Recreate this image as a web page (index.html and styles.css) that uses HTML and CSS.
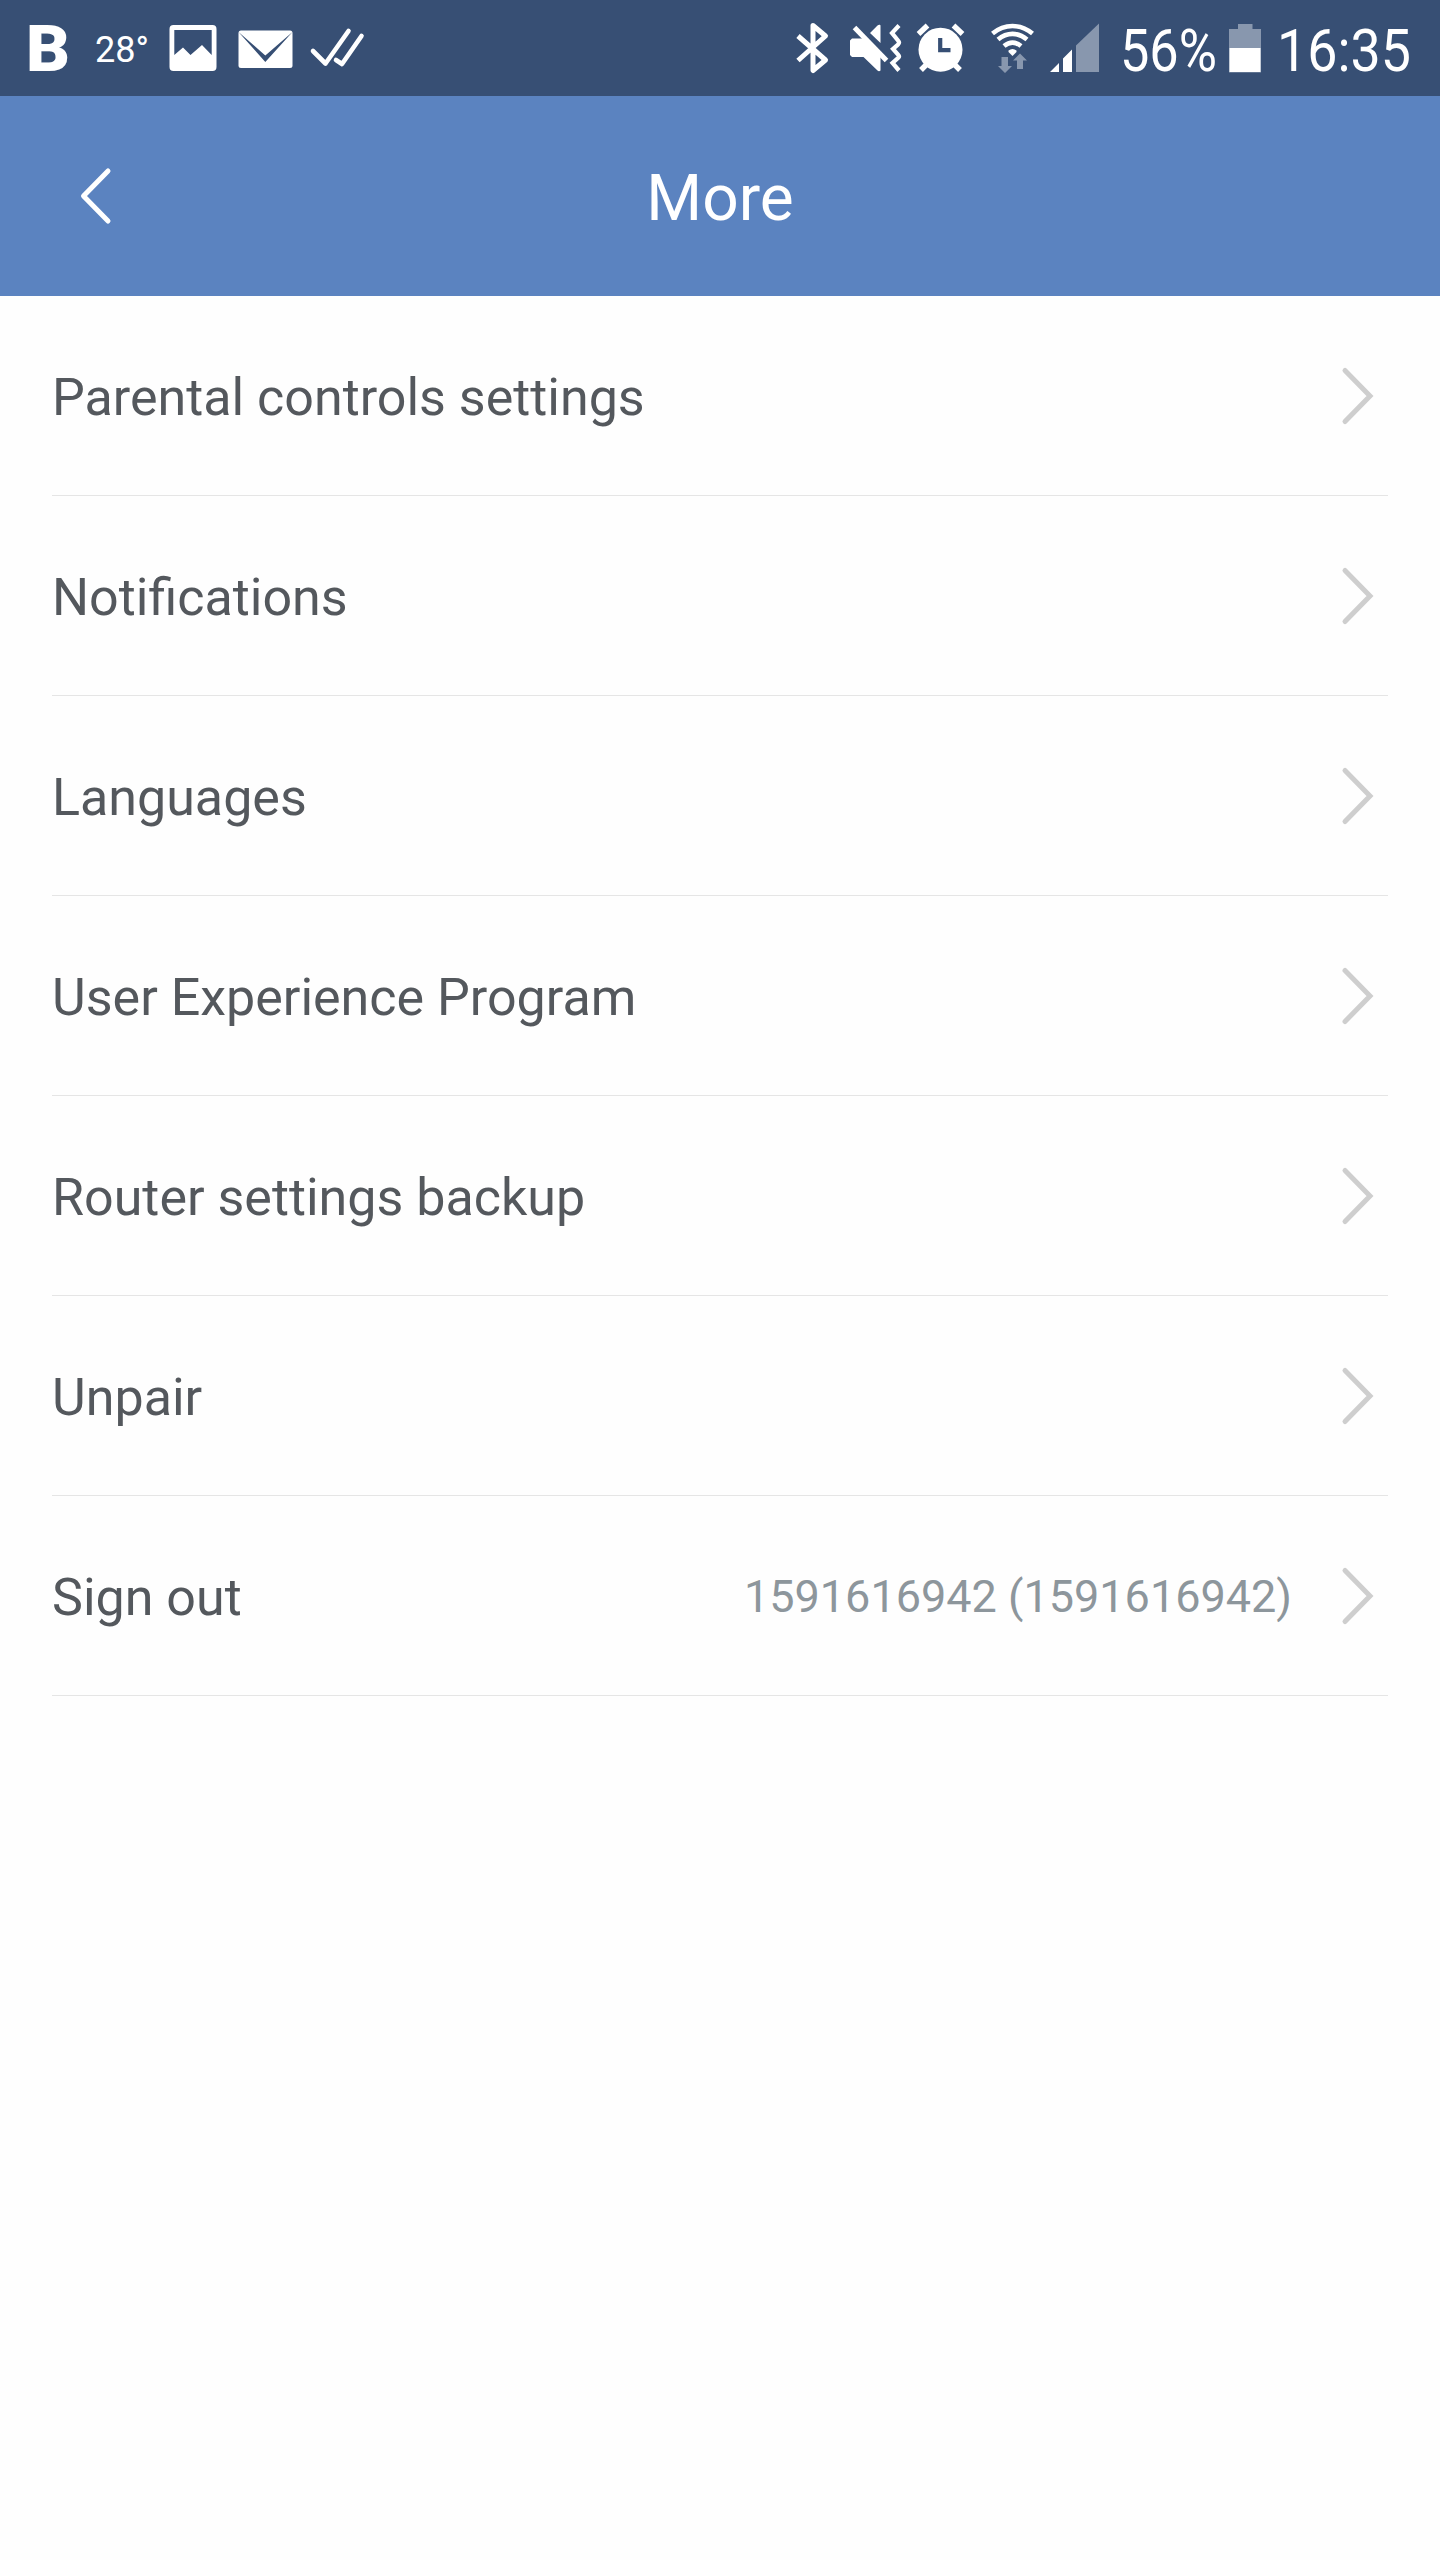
FILE: index.html
```html
<!DOCTYPE html>
<html lang="en">
  <head>
    <meta charset="UTF-8" />
    <meta name="viewport" content="width=device-width, initial-scale=1.0" />
    <title>More</title>
    <link rel="stylesheet" href="styles.css">
  </head>

  <body>
    <div class="status">
      <div class="status_left">
        <svg width="60" height="96" viewBox="24 0 60 96">
          <text x="26" y="71" class="logo" textLength="44" lengthAdjust="spacingAndGlyphs">B</text>
        </svg>
        <svg width="76" height="96" viewBox="84 0 76 96">
          <text x="95" y="62" class="temp" textLength="54" lengthAdjust="spacingAndGlyphs">28°</text>
        </svg>
        <!-- picture -->
        <svg width="66" height="96" viewBox="160 0 66 96">
          <path fill-rule="evenodd" d="M173.500 25h39a4 4 0 0 1 4 4v38a4 4 0 0 1-4 4h-39a4 4 0 0 1-4-4v-38a4 4 0 0 1 4-4zM174.300 30v25l8.700-7.500 7.500 7.500 11.500-10 9.700 10v-25z" />
        </svg>
        <!-- mail -->
        <svg width="76" height="96" viewBox="226 0 76 96">
          <rect x="238.500" y="30.500" width="54" height="37.500" rx="2.500" />
          <path class="cut" d="M238.500 32l26.800 23.500 27.200-23.500-27.200 30z" />
        </svg>
        <!-- double check -->
        <svg width="70" height="96" viewBox="302 0 70 96">
          <path class="line round" d="M313 51l12.500 12.500 23-32.500M336 60l6 4 19.500-28" stroke-width="4.600" />
        </svg>
      </div>
      <div class="status_right">
        <!-- bluetooth -->
        <svg width="50" height="96" viewBox="790 0 50 96">
          <path class="line" stroke-linejoin="round" d="M798 36l27.500 24-12.500 10.500v-45l12.500 10.500-27.500 24.500" stroke-width="5" />
        </svg>
        <!-- muted, vibrating -->
        <svg width="68" height="96" viewBox="840 0 68 96">
          <path d="M852 38.500h12l16.500 14v18c-1 1-2 1-3 0l-14-13.500h-11.500l-2-2v-14.500zM880.500 43l-10.500-10 7.500-7.500c1-1 3-1 3 0z" />
          <path class="line" d="M854.500 27.500l32 33" stroke-width="5" />
          <path class="line" d="M899 25.500l-7 7.500 6 7.500c1.500 2 1.500 2 0 4l-5 4.500 5 5.500c1.500 2 1.500 2 0 3.500l-5.500 5 6.500 7.500" stroke-width="4.200" />
        </svg>
        <!-- alarm -->
        <svg width="68" height="96" viewBox="908 0 68 96">
          <circle cx="940.500" cy="49.700" r="22" />
          <path class="line" d="M918.500 34l9-8.500M953.500 25.500l9 8.500M928 63l-7 7M953 63l7 7" stroke-width="5.400" />
          <path class="cut_line" d="M940.200 38v12.200h10.300" stroke-width="4.200" />
        </svg>
        <!-- wifi -->
        <svg width="68" height="96" viewBox="976 0 68 96">
          <path class="line" d="M992.500 33.500c12-10 28-10 40 0M998 39.500c9-7.500 20-7.500 29 0M1004 46c5.500-4.500 11.500-4.500 17 0" stroke-width="4.600" />
          <path d="M1008.500 50.500c2.500-2 5.500-2 8 0v1.500l-4 4-4-4z" />
          <path class="dim" d="M1001.500 57h6.500v9h4l-7 7-7-7h3.500zM1017 69v-8.500h-4l7-7 7 7h-4v8.500z" />
        </svg>
        <!-- signal -->
        <svg width="66" height="96" viewBox="1044 0 66 96">
          <path d="M1050 72l9-9v9zM1063 72v-13.500l9-9v22.500z" />
          <path class="dim" d="M1076 72v-26.500l23-22v48.500z" />
        </svg>
        <svg width="112" height="96" viewBox="1110 0 112 96">
          <text x="1120" y="71" class="clock" textLength="97" lengthAdjust="spacingAndGlyphs">56%</text>
        </svg>
        <!-- battery -->
        <svg width="46" height="96" viewBox="1222 0 46 96">
          <path class="dim" d="M1229 29h9v-5h14.500v5h8.500v43.500h-32z" />
          <path d="M1229.500 48h31v24h-31z" />
        </svg>
        <svg width="148" height="96" viewBox="1268 0 148 96">
          <text x="1277" y="71" class="clock" textLength="134" lengthAdjust="spacingAndGlyphs">16:35</text>
        </svg>
      </div>
    </div>

    <div class="header">
      <svg class="back" width="40" height="64" viewBox="0 0 40 64">
        <path class="line round" d="M32 7l-24.500 25 24.500 25" stroke-width="5" />
      </svg>
      <h1>More</h1>
    </div>

    <ul class="list">
      <li>
        <span class="name">Parental controls settings</span>
        <svg class="arrow" width="40" height="64" viewBox="0 0 40 64"><path d="M7 6.500l25 25.500-25 25.500" /></svg>
      </li>
      <li>
        <span class="name">Notifications</span>
        <svg class="arrow" width="40" height="64" viewBox="0 0 40 64"><path d="M7 6.500l25 25.500-25 25.500" /></svg>
      </li>
      <li>
        <span class="name">Languages</span>
        <svg class="arrow" width="40" height="64" viewBox="0 0 40 64"><path d="M7 6.500l25 25.500-25 25.500" /></svg>
      </li>
      <li>
        <span class="name">User Experience Program</span>
        <svg class="arrow" width="40" height="64" viewBox="0 0 40 64"><path d="M7 6.500l25 25.500-25 25.500" /></svg>
      </li>
      <li>
        <span class="name">Router settings backup</span>
        <svg class="arrow" width="40" height="64" viewBox="0 0 40 64"><path d="M7 6.500l25 25.500-25 25.500" /></svg>
      </li>
      <li>
        <span class="name">Unpair</span>
        <svg class="arrow" width="40" height="64" viewBox="0 0 40 64"><path d="M7 6.500l25 25.500-25 25.500" /></svg>
      </li>
      <li>
        <span class="name">Sign out</span>
        <span class="account">1591616942 (1591616942)</span>
        <svg class="arrow" width="40" height="64" viewBox="0 0 40 64"><path d="M7 6.500l25 25.500-25 25.500" /></svg>
      </li>
    </ul>
  </body>
</html>
```
FILE: styles.css
```css
* {
  margin: 0;
  padding: 0;
  box-sizing: border-box;
}

body {
  min-height: 2560px;
  background-color: #fefefe;
  font-family: Roboto, sans-serif;
}

svg {
  display: block;
  flex-shrink: 0;
}

li {
  list-style-type: none;
}

.status {
  display: flex;
  justify-content: space-between;
  height: 96px;
  padding: 0 24px;
  background-color: #374f74;
}

.status_left,
.status_right {
  display: flex;
}

.status svg {
  fill: #fff;
}

.status .dim {
  fill: #8897ae;
}

.status .cut {
  fill: #374f74;
}

.line {
  fill: none;
  stroke: #fff;
}

.cut_line {
  fill: none;
  stroke: #374f74;
}

.round {
  stroke-linecap: round;
  stroke-linejoin: round;
}

.logo {
  font-size: 65px;
  font-weight: 900;
}

.temp {
  font-size: 37px;
}

.clock {
  font-size: 60px;
}

.header {
  display: grid;
  grid-template-columns: 76px 1fr 76px;
  align-items: center;
  height: 200px;
  padding: 0 76px;
  background-color: #5b83c0;
}

.header h1 {
  padding-top: 5px;
  font-size: 64px;
  font-weight: 400;
  line-height: 76px;
  text-align: center;
  color: #fff;
}

.list {
  padding: 0 52px;
}

.list li {
  display: flex;
  align-items: center;
  height: 200px;
  border-bottom: 1px solid #e5e5e5;
}

.name {
  flex: 1;
  padding-top: 4px;
  font-size: 52px;
  line-height: 62px;
  color: #54585d;
}

.account {
  margin-right: 46px;
  padding-top: 2px;
  font-size: 45px;
  color: #8d969c;
}

.arrow {
  margin-right: 10px;
}

.arrow path {
  fill: none;
  stroke: #cecece;
  stroke-width: 5;
  stroke-linecap: round;
}
```
